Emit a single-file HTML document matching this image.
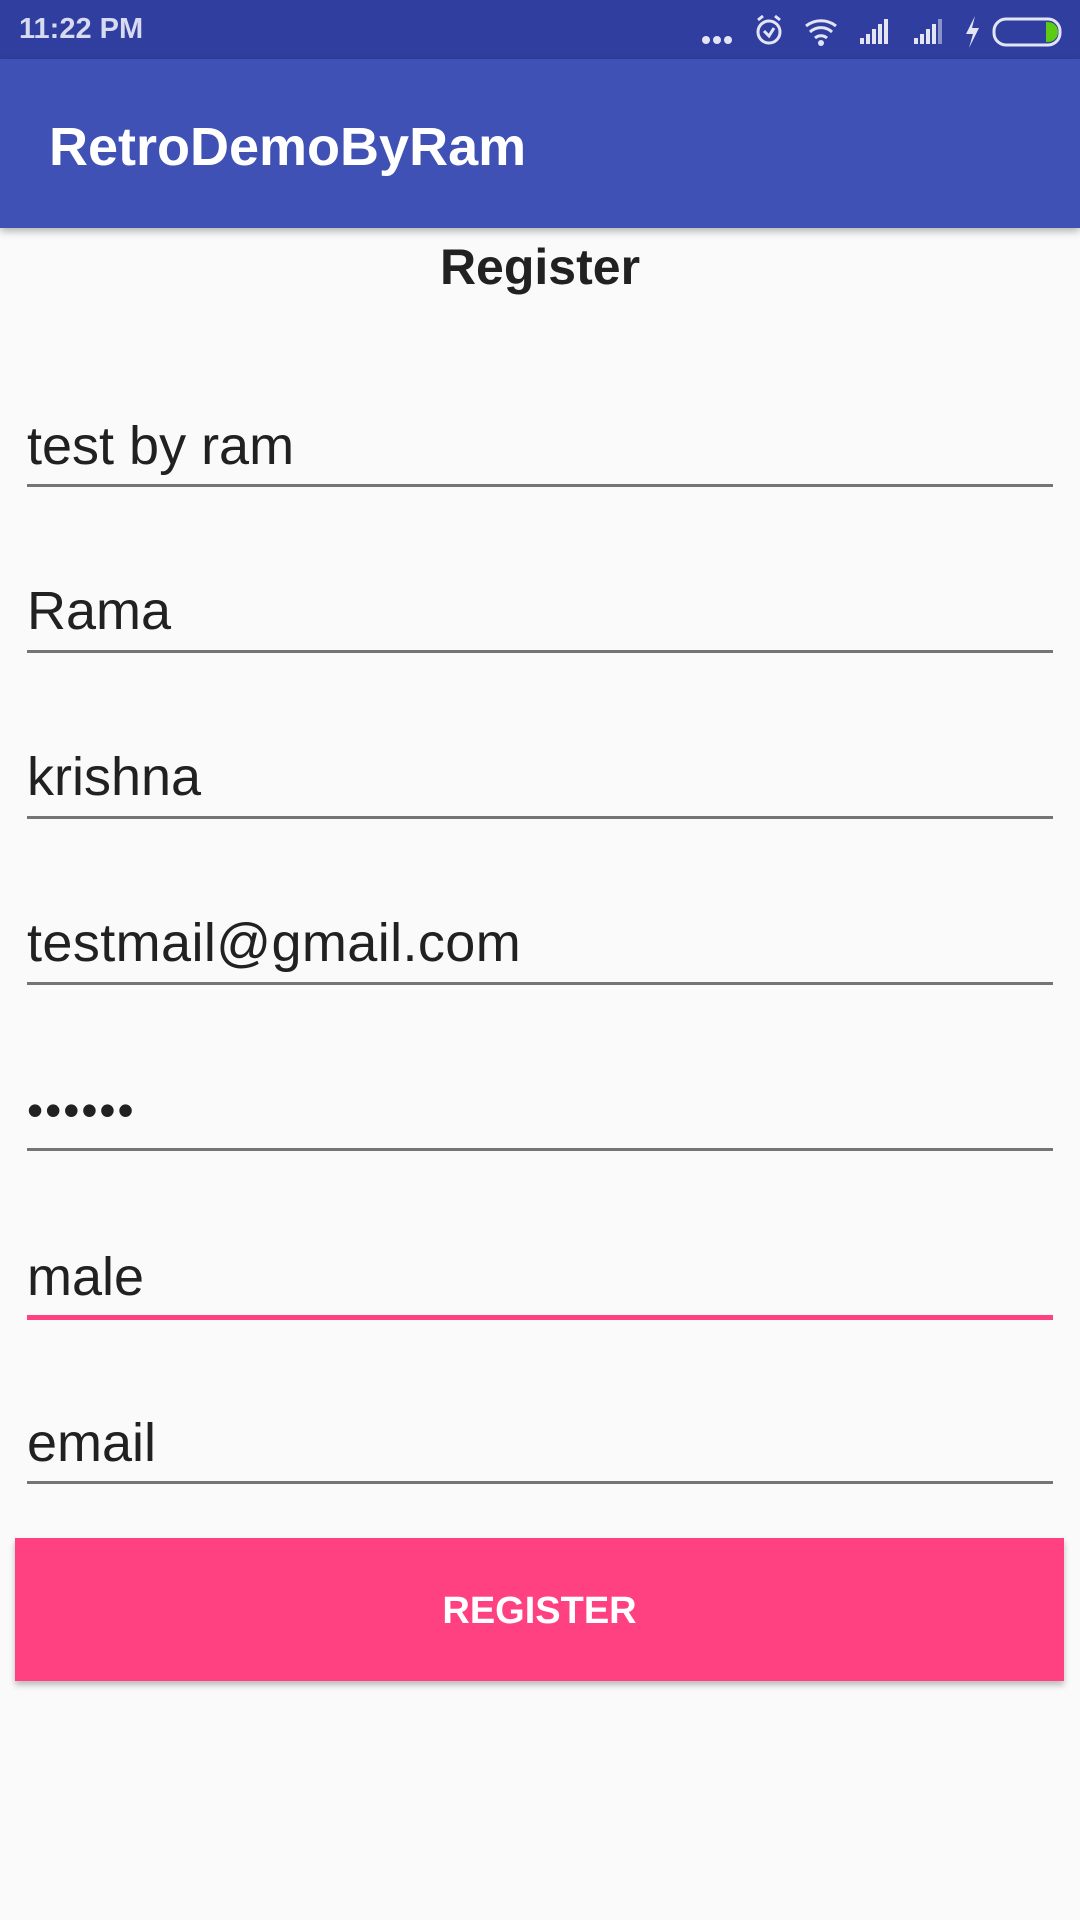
<!DOCTYPE html>
<html><head><meta charset="utf-8"><style>
*{margin:0;padding:0;box-sizing:border-box}
body{width:1080px;height:1920px;background:#FAFAFA;position:relative;overflow:hidden;font-family:"Liberation Sans",Arial,sans-serif;color:#212121}
.sb{position:absolute;left:0;top:0;width:1080px;height:59px;background:#303F9F}
.ab{position:absolute;left:0;top:59px;width:1080px;height:169px;background:#3F51B5;box-shadow:0 3px 8px rgba(0,0,0,.3)}
.t{position:absolute;left:27px;font-size:54px;line-height:54px;white-space:nowrap}
.l{position:absolute;left:27px;width:1026px;height:3px;background:#757575}
</style></head><body>
<div class="sb">
<div style="position:absolute;left:19px;top:13px;font-size:29px;font-weight:bold;color:#D7DAF0">11:22 PM</div>
<svg style="position:absolute;left:700px;top:12px" width="370" height="38" viewBox="0 0 370 38">
<g fill="#E3E5F5">
<circle cx="6" cy="28" r="4"/><circle cx="17" cy="28" r="4"/><circle cx="28" cy="28" r="4"/>
</g>
<g stroke="#E3E5F5" stroke-width="3" fill="none">
<circle cx="69" cy="20" r="11"/><path d="M64 19l5 5 5-8"/><path d="M58 8l5-4M80 8l-5-4"/>
<path d="M106 14a24 24 0 0 1 30 0M110 20a16 16 0 0 1 22 0M115 26a9 9 0 0 1 12 0"/>
</g>
<g fill="#E3E5F5">
<circle cx="121" cy="31" r="3"/>
<rect x="160" y="26" width="4" height="6"/><rect x="166" y="22" width="4" height="10"/><rect x="172" y="17" width="4" height="15"/><rect x="178" y="12" width="4" height="20"/><rect x="184" y="7" width="4" height="25"/>
<rect x="214" y="26" width="4" height="6"/><rect x="220" y="22" width="4" height="10"/><rect x="226" y="17" width="4" height="15"/><rect x="232" y="12" width="4" height="20"/><rect x="238" y="7" width="4" height="25" opacity=".5"/>
<path d="M275 4l-9 18h7l-4 14 10-20h-7z"/>
</g>
<rect x="294" y="7" width="66" height="26" rx="12" fill="none" stroke="#E3E5F5" stroke-width="3"/>
<path d="M346 10h2a9 9 0 0 1 0 20h-2z" fill="#5BCB13"/>
</svg>
</div>
<div class="ab"><div style="position:absolute;left:49px;top:57px;font-size:54px;color:#fff;font-weight:bold">RetroDemoByRam</div></div>
<div style="position:absolute;left:0;width:1080px;top:238px;text-align:center;font-size:50px;font-weight:bold;color:#212121">Register</div>

<div class="t" style="top:419px">test by ram</div><div class="l" style="top:484px"></div>
<div class="t" style="top:584px">Rama</div><div class="l" style="top:650px"></div>
<div class="t" style="top:750px">krishna</div><div class="l" style="top:816px"></div>
<div class="t" style="top:916px;letter-spacing:.4px">testmail@gmail.com</div><div class="l" style="top:982px"></div>
<div class="t" style="top:1083px;font-size:46px;letter-spacing:2px">••••••</div><div class="l" style="top:1148px"></div>
<div class="t" style="top:1250px">male</div><div class="l" style="top:1315px;height:5px;background:#FF4081"></div>
<div class="t" style="top:1416px">email</div><div class="l" style="top:1481px"></div>

<div style="position:absolute;left:15px;top:1538px;width:1049px;height:143px;background:#FF4081;box-shadow:0 4px 6px rgba(0,0,0,.25);color:#fff;font-size:38px;font-weight:bold;text-align:center;line-height:146px">REGISTER</div>
</body></html>
